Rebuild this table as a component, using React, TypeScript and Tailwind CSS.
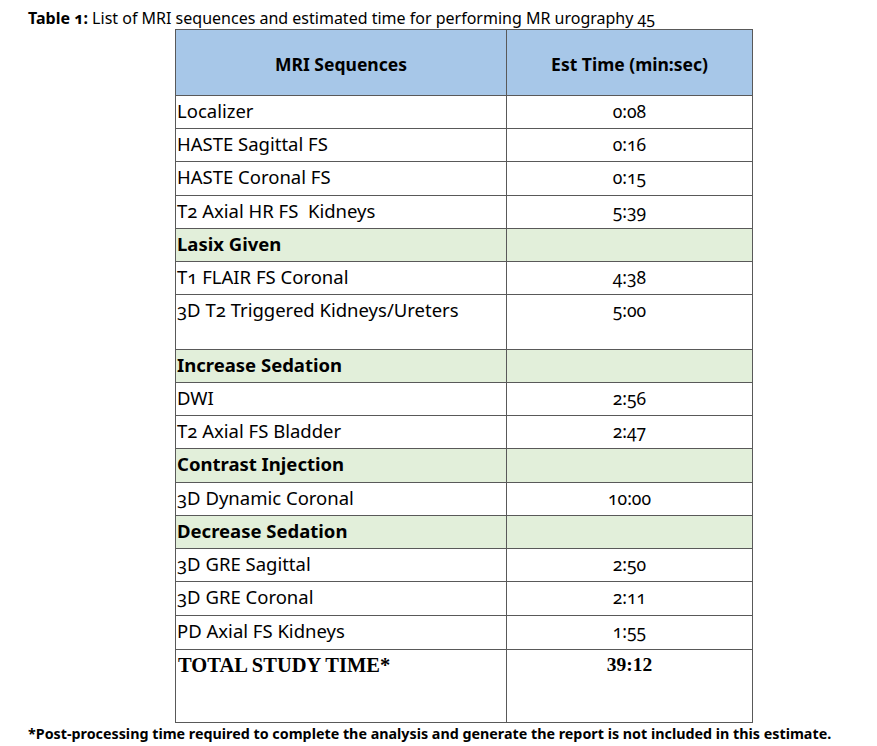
import React from "react";

type Row = { name: string; time?: string; kind?: "group" | "total"; h: number };

const rows: Row[] = [
  { name: "Localizer", time: "0:08", h: 33 },
  { name: "HASTE Sagittal FS", time: "0:16", h: 33 },
  { name: "HASTE Coronal FS", time: "0:15", h: 34 },
  { name: "T2 Axial HR FS  Kidneys", time: "5:39", h: 33 },
  { name: "Lasix Given", kind: "group", h: 33 },
  { name: "T1 FLAIR FS Coronal", time: "4:38", h: 33 },
  { name: "3D T2 Triggered Kidneys/Ureters", time: "5:00", h: 55 },
  { name: "Increase Sedation", kind: "group", h: 33 },
  { name: "DWI", time: "2:56", h: 33 },
  { name: "T2 Axial FS Bladder", time: "2:47", h: 33 },
  { name: "Contrast Injection", kind: "group", h: 34 },
  { name: "3D Dynamic Coronal", time: "10:00", h: 33 },
  { name: "Decrease Sedation", kind: "group", h: 33 },
  { name: "3D GRE Sagittal", time: "2:50", h: 33 },
  { name: "3D GRE Coronal", time: "2:11", h: 34 },
  { name: "PD Axial FS Kidneys", time: "1:55", h: 34 },
  { name: "TOTAL STUDY TIME*", time: "39:12", kind: "total", h: 72 },
];

const sans = { fontFamily: '"Noto Sans", "Open Sans", sans-serif' };
const serif = { fontFamily: '"Liberation Serif", serif' };

export default function App() {
  return (
    <div className="w-[877px] h-[746px] bg-white text-black" style={sans}>
      <div className="pt-[8px] pl-[28px] text-[16px] leading-[20px] whitespace-nowrap oldstyle-nums">
        <span className="font-bold">Table 1:</span> List of MRI sequences and estimated time for performing MR urography 45
      </div>
      <div className="mt-[1px] ml-[175px] w-[578px] border border-[#595959] oldstyle-nums">
        <div className="flex h-[66px] bg-[#a7c7e8] border-b border-[#595959] font-bold text-[17.5px]">
          <div className="w-[331px] border-r border-[#595959] flex items-center justify-center pt-[3px]">MRI Sequences</div>
          <div className="flex-1 flex items-center justify-center pt-[3px]">Est Time (min:sec)</div>
        </div>
        {rows.map((r, i) => {
          const last = i === rows.length - 1;
          const bg = r.kind === "group" ? "bg-[#e2efda]" : "bg-white";
          return (
            <div
              key={r.name}
              className={`flex ${bg} ${last ? "" : "border-b border-[#595959]"}`}
              style={{ height: r.h }}
            >
              {r.kind === "total" ? (
                <>
                  <div
                    className="w-[331px] border-r border-[#595959] pl-[2px] pt-[2px] text-[20.5px] leading-[26px] font-bold"
                    style={serif}
                  >
                    {r.name}
                  </div>
                  <div className="flex-1 text-center pt-[2px] text-[19.5px] leading-[26px] font-bold" style={serif}>
                    {r.time}
                  </div>
                </>
              ) : (
                <>
                  <div
                    className={`w-[331px] border-r border-[#595959] pl-[1px] pt-[2px] text-[18.5px] leading-[26px] whitespace-pre ${
                      r.kind === "group" ? "font-bold" : ""
                    }`}
                  >
                    {r.name}
                  </div>
                  <div className="flex-1 text-center pt-[2px] text-[17.5px] leading-[26px]">{r.time ?? ""}</div>
                </>
              )}
            </div>
          );
        })}
      </div>
      <div className="pt-[1px] pl-[28px] text-[14.3px] leading-[20px] font-bold whitespace-nowrap">
        *Post-processing time required to complete the analysis and generate the report is not included in this estimate.
      </div>
    </div>
  );
}
